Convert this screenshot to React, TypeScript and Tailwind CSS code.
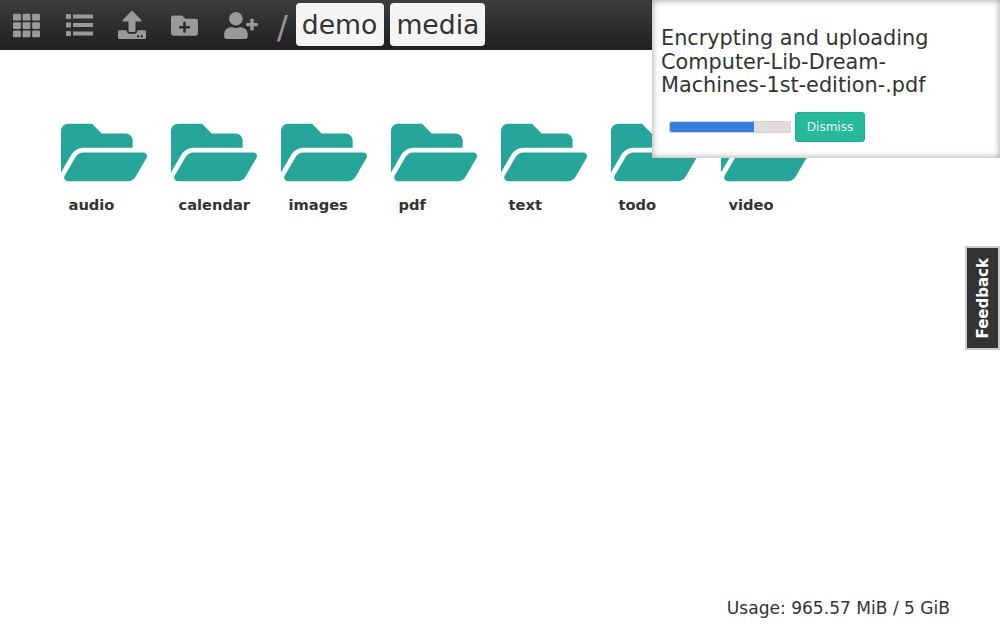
import { FaTh, FaUpload, FaFolderPlus, FaUserPlus, FaFolderOpen } from 'react-icons/fa';

const folders = ['audio', 'calendar', 'images', 'pdf', 'text', 'todo', 'video'];

function ListIcon() {
    return (
        <svg className="ml-[26px] h-[24px] w-[27px]" viewBox="0 0 27 24" fill="currentColor">
            <rect x="0" y="1" width="5" height="5" rx="1" />
            <rect x="7" y="1.5" width="20" height="4" />
            <rect x="0" y="9.5" width="5" height="5" rx="1" />
            <rect x="7" y="10" width="20" height="4" />
            <rect x="0" y="18" width="5" height="5" rx="1" />
            <rect x="7" y="18.5" width="20" height="4" />
        </svg>
    );
}

export default function App() {
    return (
        <div className="relative h-[624px] w-[1000px] overflow-hidden bg-white font-['DejaVu_Sans',sans-serif] text-[#333]">
            {/* Toolbar */}
            <div className="flex h-[50px] items-center bg-gradient-to-b from-[#3d3d3d] to-[#1f1f1f] pl-[13px] text-[#999]">
                <FaTh className="h-[27px] w-[27px]" />
                <ListIcon />
                <FaUpload className="ml-[25px] h-[28px] w-[28px]" />
                <FaFolderPlus className="ml-[25px] h-[27px] w-[27px]" />
                <FaUserPlus className="ml-[26px] h-[27px] w-[34px]" />
                <span className="ml-[19px] mt-[4px] text-[32px] leading-none">/</span>
                <span className="ml-[8px] mt-[-2px] rounded bg-[#f5f5f5] py-[6px] pl-[6px] pr-[7px] text-[26.67px] leading-[31px] text-[#333]">demo</span>
                <span className="ml-[6px] mt-[-2px] rounded bg-[#f5f5f5] px-[6px] py-[6px] text-[26.67px] leading-[31px] text-[#333]">media</span>
            </div>

            {/* Folders */}
            <div className="flex pl-[61px] pt-[64px]">
                {folders.map((name) => (
                    <div key={name} className="w-[110px]">
                        <FaFolderOpen className="h-[77px] w-[86px] text-[#26a69a]" />
                        <div className="ml-[7.5px] mt-[5px] text-[14.67px] font-bold leading-[18px]">{name}</div>
                    </div>
                ))}
            </div>

            {/* Upload popup */}
            <div className="absolute right-0 top-0 h-[158px] w-[348px] bg-white pl-[9px] pt-[26px] shadow-[inset_0_0_7px_rgba(0,0,0,0.4)]">
                <div className="mt-[1px] text-[20.8px] leading-[23.5px]">
                    Encrypting and uploading
                    <br />
                    Computer-Lib-Dream-
                    <br />
                    Machines-1st-edition-.pdf
                </div>
                <div className="ml-[8px] mt-[14px] flex items-center">
                    <div className="h-[12px] w-[122px] rounded-[2px] border border-[#d4d0cc] bg-[#e0dcd9]">
                        <div className="h-full w-[70%] rounded-l-[2px] bg-[#337fdf]" />
                    </div>
                    <button className="ml-[4px] h-[30px] w-[70px] rounded-[3px] border border-[#1fae90] bg-[#26b99a] text-[12px] text-[#e8f6f3]">
                        Dismiss
                    </button>
                </div>
            </div>

            {/* Feedback tab */}
            <div className="absolute right-0 top-[246px] flex h-[104px] w-[35px] items-center justify-center border-2 border-[#ccc] bg-[#333] pl-[1px]">
                <span className="-rotate-90 whitespace-nowrap text-[15px] font-bold text-white">Feedback</span>
            </div>

            {/* Usage */}
            <div className="absolute bottom-[6px] right-[50px] text-[17.07px] leading-[20px]">Usage: 965.57 MiB / 5 GiB</div>
        </div>
    );
}
